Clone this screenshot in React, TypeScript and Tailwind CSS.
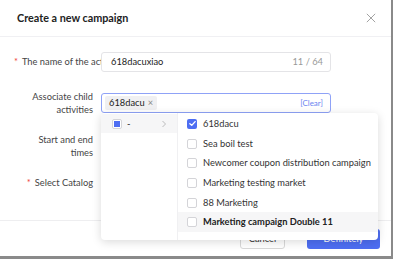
import React from 'react';

const options = [
  { label: '618dacu', checked: true },
  { label: 'Sea boil test' },
  { label: 'Newcomer coupon distribution campaign' },
  { label: 'Marketing testing market' },
  { label: '88 Marketing' },
  { label: 'Marketing campaign Double 11', active: true },
];

const Check = ({ checked }: { checked?: boolean }) =>
  checked ? (
    <span className="flex h-[10px] w-[10px] shrink-0 items-center justify-center rounded-[2px] bg-[#4e6ef2]">
      <svg viewBox="0 0 12 12" className="h-[9px] w-[9px]">
        <path d="M2.5 6.2 5 8.5 9.5 3.5" fill="none" stroke="#fff" strokeWidth="1.8" strokeLinecap="round" strokeLinejoin="round" />
      </svg>
    </span>
  ) : (
    <span className="h-[10px] w-[10px] shrink-0 rounded-[2px] border border-[#d4d4d8] bg-white" />
  );

const App: React.FC = () => {
  return (
    <div className="h-[259px] w-[393px] overflow-hidden bg-[#8a8a8a] font-['Lato','Noto_Sans',sans-serif] text-[9.3px] text-[#333]">
      <div className="relative flex h-[256px] w-[391px] flex-col bg-white">
        <div className="flex h-[37px] items-center justify-between border-b border-[#f0f0f3] pl-[17px] pr-[15px]">
          <h1 className="text-[10.8px] font-bold text-[#222]">Create a new campaign</h1>
          <svg viewBox="0 0 12 12" className="h-[10px] w-[10px]">
            <path d="M1 1 11 11M11 1 1 11" stroke="#999" strokeWidth="1.1" />
          </svg>
        </div>

        <div className="flex flex-1 flex-col">
          <div className="mt-[15px] flex items-center">
            <div className="flex w-[101px] shrink-0 overflow-hidden whitespace-nowrap pl-[14px] text-[#444]">
              <span className="mr-[4px] text-[#f0463c]">*</span>The name of the activity
            </div>
            <div className="flex h-[20px] w-[230px] items-center justify-between rounded-[3px] border border-[#e4e4e7] pl-[9px] pr-[7px]">
              <span className="text-[#222]">618dacuxiao</span>
              <span className="text-[#999]">11 / 64</span>
            </div>
          </div>

          <div className="mt-[18px] flex items-center">
            <div className="w-[93px] shrink-0 text-right leading-[13px] text-[#444]">Associate child<br />activities</div>
            <div className="ml-[8px] flex h-[20px] w-[230px] items-center justify-between rounded-[3px] border border-[#8fa2f7] pl-[3px] pr-[7px]">
              <span className="flex h-[14px] items-center gap-[3px] rounded-[2px] bg-[#f0f0f2] px-[4px] text-[#222]">
                618dacu<span className="text-[#888]">×</span>
              </span>
              <span className="text-[8px] text-[#6b84f0]">[Clear]</span>
            </div>
          </div>

          <div className="mt-[17px] w-[93px] text-right leading-[13px] text-[#444]">Start and end<br />times</div>

          <div className="mt-[17px] flex w-[93px] justify-end text-[#444]">
            <span className="mr-[4px] text-[#f0463c]">*</span>Select Catalog
          </div>

          <div className="mt-auto flex h-[36px] items-center justify-end gap-[22px] border-t border-[#eeeef0] pr-[11px]">
            <button className="h-[20px] w-[45px] rounded-[3px] border border-[#d9d9d9] text-[#333]">Cancel</button>
            <button className="h-[20px] w-[73px] rounded-[3px] bg-[#4e6ef2] text-white">Definitely</button>
          </div>
        </div>

        <div className="absolute left-[101px] top-[113px] flex h-[127px] w-[277px] overflow-hidden rounded-[4px] bg-white shadow-[0_2px_10px_rgba(0,0,0,0.15)]">
          <div className="w-[77px] shrink-0 border-r border-[#f0f0f2] pt-[1px]">
            <div className="flex h-[19px] items-center bg-[#f6f6f7] pl-[11px] pr-[10px]">
              <span className="flex h-[10px] w-[10px] items-center justify-center rounded-[2px] border border-[#d4d4d8] bg-white">
                <span className="h-[6px] w-[6px] bg-[#4e6ef2]" />
              </span>
              <span className="ml-[5px] flex-1 text-[#222]">-</span>
              <svg viewBox="0 0 8 10" className="h-[8px] w-[6px]">
                <path d="M2 1 6 5 2 9" fill="none" stroke="#aaa" strokeWidth="1" />
              </svg>
            </div>
          </div>
          <div className="flex-1 pt-[1px]">
            {options.map((o) => (
              <div
                key={o.label}
                className={`flex h-[19.7px] items-center gap-[6px] pl-[9px] whitespace-nowrap ${o.active ? 'bg-[#f6f6f7] font-bold text-[#222]' : 'text-[#333]'}`}
              >
                <Check checked={o.checked} />
                {o.label}
              </div>
            ))}
          </div>
        </div>
      </div>
    </div>
  );
};

export default App;
